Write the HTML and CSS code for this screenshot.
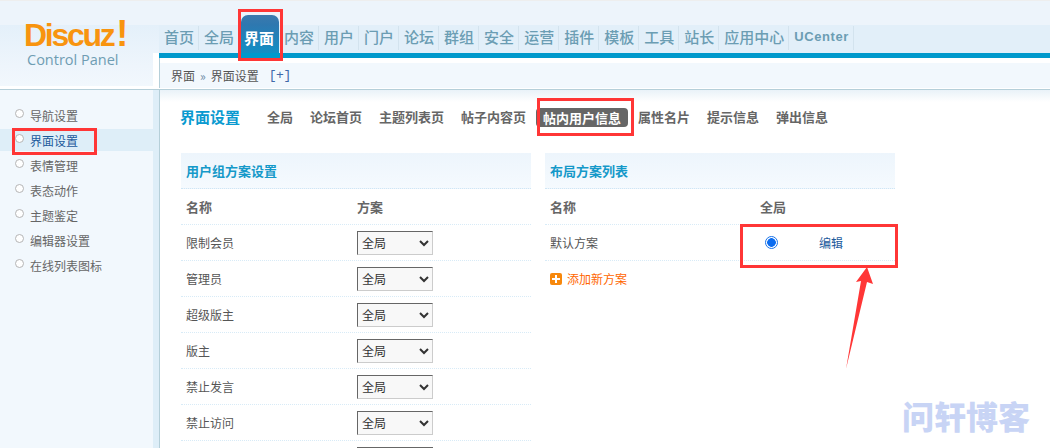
FILE: index.html
```html
<!DOCTYPE html>
<html lang="zh">
<head>
<meta charset="utf-8">
<title>界面设置</title>
<link rel="stylesheet" href="styles.css">
</head>
<body>
<header class="top">
  <div class="logo">
    <div class="logo-mark">Discuz<span class="logo-bang">!</span></div>
    <div class="logo-sub">Control Panel</div>
  </div>
  <div class="top-main">
    <nav class="nav">
      <a class="nav-item">首页</a>
      <a class="nav-item">全局</a>
      <a class="nav-item nav-active">界面</a>
      <a class="nav-item">内容</a>
      <a class="nav-item">用户</a>
      <a class="nav-item">门户</a>
      <a class="nav-item">论坛</a>
      <a class="nav-item">群组</a>
      <a class="nav-item">安全</a>
      <a class="nav-item">运营</a>
      <a class="nav-item">插件</a>
      <a class="nav-item">模板</a>
      <a class="nav-item">工具</a>
      <a class="nav-item">站长</a>
      <a class="nav-item">应用中心</a>
      <a class="nav-item nav-latin">UCenter</a>
    </nav>
    <div class="nav-bar"></div>
    <div class="crumb">界面<span class="crumb-sep">»</span>界面设置<span class="crumb-plus">[+]</span></div>
  </div>
</header>
<div class="body">
  <aside class="side">
    <ul class="menu">
      <li class="menu-item">导航设置</li>
      <li class="menu-item menu-active">界面设置</li>
      <li class="menu-item">表情管理</li>
      <li class="menu-item">表态动作</li>
      <li class="menu-item">主题鉴定</li>
      <li class="menu-item">编辑器设置</li>
      <li class="menu-item">在线列表图标</li>
    </ul>
  </aside>
  <main class="main">
    <div class="tabs">
      <h1 class="title">界面设置</h1>
      <a class="tab">全局</a>
      <a class="tab">论坛首页</a>
      <a class="tab">主题列表页</a>
      <a class="tab">帖子内容页</a>
      <a class="tab tab-active">帖内用户信息</a>
      <a class="tab">属性名片</a>
      <a class="tab">提示信息</a>
      <a class="tab">弹出信息</a>
    </div>
    <div class="panels">
      <section class="panel">
        <h2 class="panel-head">用户组方案设置</h2>
        <div class="row row-head"><span class="col-a">名称</span><span>方案</span></div>
        <div class="row"><span class="col-a">限制会员</span><select class="pick"><option>全局</option></select></div>
        <div class="row"><span class="col-a">管理员</span><select class="pick"><option>全局</option></select></div>
        <div class="row"><span class="col-a">超级版主</span><select class="pick"><option>全局</option></select></div>
        <div class="row"><span class="col-a">版主</span><select class="pick"><option>全局</option></select></div>
        <div class="row"><span class="col-a">禁止发言</span><select class="pick"><option>全局</option></select></div>
        <div class="row"><span class="col-a">禁止访问</span><select class="pick"><option>全局</option></select></div>
        <div class="row-cut"><span class="pick-edge"></span></div>
      </section>
      <section class="panel">
        <h2 class="panel-head">布局方案列表</h2>
        <div class="row row-head"><span class="col-b">名称</span><span>全局</span></div>
        <div class="row">
          <span class="col-b">默认方案</span>
          <span class="radio"></span>
          <a class="edit">编辑</a>
        </div>
        <div class="add"><span class="add-icon"></span>添加新方案</div>
      </section>
    </div>
  </main>
</div>
<div class="mark mark-nav"></div>
<div class="mark mark-side"></div>
<div class="mark mark-tab"></div>
<div class="mark mark-radio"></div>
<svg class="arrow" width="40" height="110" viewBox="0 0 40 110"><polygon fill="#ff3636" points="27,0 33,17 27,15 6,102 21,14 16,15"/></svg>
<div class="watermark">问轩博客</div>
</body>
</html>
```
FILE: styles.css
```css
* { box-sizing: border-box; }
body {
  margin: 0;
  height: 448px;
  overflow: hidden;
  position: relative;
  background: #fff;
  font: 12px/1.5 "Noto Sans CJK SC", "Liberation Sans", sans-serif;
  color: #555;
}
a { color: inherit; text-decoration: none; }
h1, h2, ul { margin: 0; padding: 0; }
ul { list-style: none; }

.top {
  display: flex;
  height: 90px;
  border-top: 1px solid #eeeeee;
  border-bottom: 1px solid #b5cfd9;
  background: #fff;
}
.logo {
  width: 159px;
  flex: none;
  padding: 18px 0 0 24px;
  background:
    linear-gradient(#fff, #fff) right 52px / 6px 100% no-repeat,
    linear-gradient(#fff, #fff) left 85px / 100% 3px no-repeat,
    linear-gradient(#edf4fb 0, #edf4fb 24px, #e4f0fa 24px, #eef5fc 65px, #f2f8fd 100%);
}
.logo-mark {
  height: 32px;
  font: bold 32px/32px "Liberation Sans", sans-serif;
  letter-spacing: -2.3px;
  color: #f8940f;
}
.logo-bang { margin-left: 3px; font-size: 36px; line-height: 30px; }
.logo-sub {
  margin: 0 0 0 3px;
  font: 14.5px/18px "Open Sans", sans-serif;
  color: #6f9db3;
}
.top-main {
  flex: 1;
  display: flex;
  flex-direction: column;
  min-width: 0;
  background: linear-gradient(#edf4fb 0, #edf4fb 24px, #fff 24px);
  padding-top: 24px;
}
.nav {
  display: flex;
  height: 28px;
  background: #e2eff9;
}
.nav-item {
  height: 24px;
  margin-top: 1px;
  padding: 0 4px 0 5px;
  font: 500 15px/21px "Noto Sans CJK SC", sans-serif;
  color: #6b9db3;
  border-right: 1px solid #d3e3ee;
}
.nav-active {
  width: 38px;
  height: 44px;
  margin: -10px 0 0 2px;
  padding: 11px 0 0 3px;
  font-weight: 700;
  line-height: 23px;
  color: #fff;
  border: 0;
  border-radius: 7px 7px 0 0;
  background: linear-gradient(#3b79ad 0, #2e78b0 10px, #0c94c9 100%);
}
.nav-latin {
  font: bold 13px/21px "Liberation Sans", sans-serif;
  letter-spacing: 0.6px;
  padding: 0 4px 0 5px;
}
.nav-bar {
  height: 5px;
  background: #0099cc;
}
.crumb {
  display: flex;
  align-items: center;
  height: 25px;
  margin-top: 5px;
  padding-left: 11px;
  border-left: 1px solid #b5cfd9;
  background: #f2f8fd;
  color: #555;
  position: relative;
}
.crumb::before {
  content: "";
  position: absolute;
  left: -1px;
  top: -5px;
  height: 5px;
  width: 1px;
  background: #b5cfd9;
}
.crumb-sep { margin: 0 5px; color: #6c8aa3; }
.crumb-plus {
  margin-left: 10px;
  font: 13px "Liberation Mono", monospace;
  letter-spacing: -0.5px;
  color: #3f68a8;
}

.body {
  display: flex;
  height: 358px;
}
.side {
  width: 160px;
  flex: none;
  background: linear-gradient(90deg, #f2f8fd 0, #f2f8fd 153px, #deeef8 153px, #deeef8 159px, #b5cfd9 159px);
  padding-top: 13px;
}
.menu-item {
  position: relative;
  width: 153px;
  height: 25px;
  padding-left: 30px;
  line-height: 25px;
  color: #666;
}
.menu-item::before {
  content: "";
  position: absolute;
  left: 15px;
  top: 6px;
  width: 7px;
  height: 7px;
  border: 1px solid #b5b5b5;
  border-radius: 50%;
  background: #fff;
}
.menu-active {
  color: #1c5a9c;
  background: linear-gradient(#deeef8, #deeef8) 0 1px / 100% 22px no-repeat;
}
.main {
  flex: 1;
  padding-left: 20px;
  min-width: 0;
  background: linear-gradient(#e9f2f8 0, #fff 12px);
}
.tabs {
  display: flex;
  align-items: center;
  height: 34px;
  margin-top: 10px;
  gap: 17px;
  color: #666;
}
.title {
  width: 70px;
  font-size: 15px;
  font-weight: 700;
  color: #0a9ad0;
}
.tab {
  font-size: 13px;
  font-weight: 700;
}
.tab-active {
  height: 19px;
  margin: 0 -7px;
  padding: 0 7px;
  line-height: 19px;
  border-radius: 4px;
  background: #666;
  color: #fff;
}
.panels {
  display: flex;
  gap: 14px;
  margin: 19px 0 0 1px;
}
.panel { width: 350px; flex: none; }
.panel-head {
  height: 36px;
  padding-left: 5px;
  font-size: 13px;
  font-weight: 700;
  line-height: 36px;
  color: #1599c9;
  background: linear-gradient(#edf5fc, #f5fafe);
  border-bottom: 1px dotted #cfe6f5;
}
.row {
  display: flex;
  align-items: center;
  height: 36px;
  padding-left: 5px;
  border-bottom: 1px dotted #d8ebf7;
}
.row-head { font-size: 13px; font-weight: 700; color: #666; }
.col-a { width: 171px; flex: none; }
.col-b { width: 210px; flex: none; }
.pick {
  width: 76px;
  height: 24px;
  padding: 0;
  font: 12px "Noto Sans CJK SC", sans-serif;
  color: #333;
  background: #f8f8f8;
  border: 1px solid;
  border-color: #666 #ccc #ccc #666;
  border-radius: 0;
}
.row-cut {
  height: 7px;
  padding: 6px 0 0 176px;
  overflow: hidden;
}
.pick-edge {
  display: block;
  width: 76px;
  height: 1px;
  background: #666;
}
.radio {
  width: 13px;
  height: 13px;
  margin-left: 5px;
  border: 1px solid #1a73e8;
  border-radius: 50%;
  background: radial-gradient(circle, #0a6cf0 0, #0a6cf0 4px, #fff 4.6px);
}
.edit { margin-left: 41px; color: #1c5a9c; }
.add {
  display: flex;
  align-items: center;
  gap: 5px;
  height: 36px;
  padding-left: 5px;
  color: #f60;
}
.add-icon {
  width: 12px;
  height: 12px;
  border-radius: 2px;
  background:
    linear-gradient(#fff, #fff) center / 8px 2px no-repeat,
    linear-gradient(#fff, #fff) center / 2px 8px no-repeat,
    #f7880c;
}
.mark {
  position: absolute;
  border: 3px solid #ff3636;
  pointer-events: none;
}
.mark-nav { left: 238px; top: 9px; width: 45px; height: 52px; }
.mark-side { left: 12px; top: 128px; width: 85px; height: 27px; }
.mark-tab { left: 537px; top: 98px; width: 97px; height: 38px; }
.mark-radio { left: 740px; top: 224px; width: 158px; height: 44px; }
.arrow { position: absolute; left: 840px; top: 267px; }
.watermark {
  position: absolute;
  left: 902px;
  top: 396px;
  font: 900 32px/38px "Noto Sans CJK SC", sans-serif;
  color: #c8d4f5;
}
```
